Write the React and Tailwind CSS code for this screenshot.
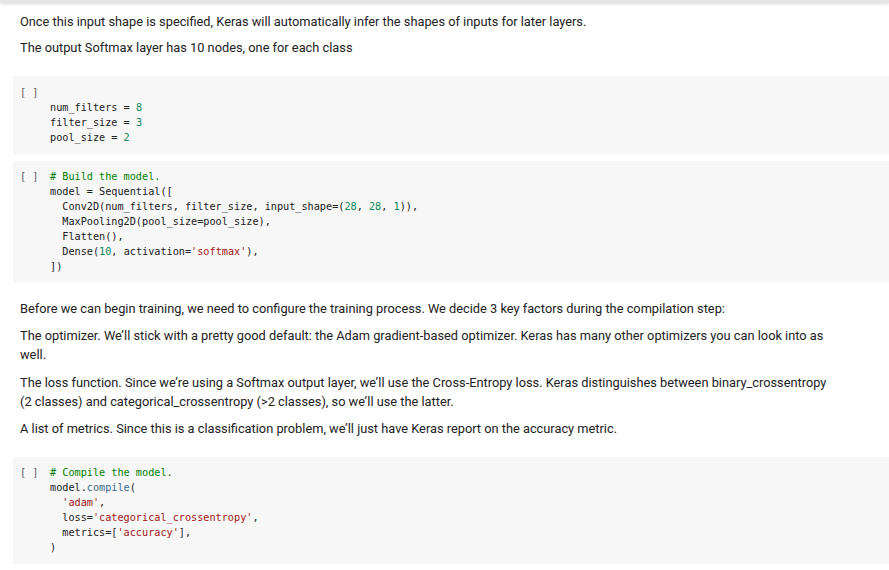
import React from "react";

const N = ({ children }) => <span className="text-[#09885a]">{children}</span>;
const S = ({ children }) => <span className="text-[#a31515]">{children}</span>;
const C = ({ children }) => <span className="text-[#008000]">{children}</span>;
const F = ({ children }) => <span className="text-[#3b6e8f]">{children}</span>;

function Cell({ lines, inline = true, className = "" }) {
  return (
    <div className={`ml-[13px] bg-[#f7f7f7] ${className}`}>
      <div className="flex font-['DejaVu_Sans_Mono',monospace] text-[10.2px] leading-[15px] text-[#212121] whitespace-pre">
        <div className="w-[37px] pl-[7px] text-[#616161]">[ ]</div>
        <div className={inline ? "" : "pt-[15px]"}>
          {lines.map((l, i) => (
            <div key={i}>{l}</div>
          ))}
        </div>
      </div>
    </div>
  );
}

function Md({ children, className = "" }) {
  return <p className={`leading-[19px] ${className}`}>{children}</p>;
}

export default function App() {
  return (
    <div className="w-[889px] h-[570px] overflow-hidden bg-white font-['Roboto',sans-serif] text-[12.8px] text-[#222222]">
      <div className="h-[3px] bg-[#e6e6e6] shadow-[0_1px_3px_rgba(0,0,0,0.15)]" />

      <div className="pl-5 pt-[9px] flex flex-col gap-[7px]">
        <Md>Once this input shape is specified, Keras will automatically infer the shapes of inputs for later layers.</Md>
        <Md>The output Softmax layer has 10 nodes, one for each class</Md>
      </div>

      <Cell
        className="mt-[19px] pt-[9px] pb-[9px]"
        inline={false}
        lines={[
          <>num_filters = <N>8</N></>,
          <>filter_size = <N>3</N></>,
          <>pool_size = <N>2</N></>,
        ]}
      />

      <Cell
        className="mt-[7px] pt-[8px] pb-[8px]"
        lines={[
          <C># Build the model.</C>,
          <>model = Sequential([</>,
          <>  Conv2D(num_filters, filter_size, input_shape=(<N>28</N>, <N>28</N>, <N>1</N>)),</>,
          <>  MaxPooling2D(pool_size=pool_size),</>,
          <>  Flatten(),</>,
          <>  Dense(<N>10</N>, activation=<S>'softmax'</S>),</>,
          <>])</>,
        ]}
      />

      <div className="pl-5 pt-[17px] pr-[56px] flex flex-col gap-[8px]">
        <Md>Before we can begin training, we need to configure the training process. We decide 3 key factors during the compilation step:</Md>
        <Md>The optimizer. We’ll stick with a pretty good default: the Adam gradient-based optimizer. Keras has many other optimizers you can look into as well.</Md>
        <Md className="mt-px">The loss function. Since we’re using a Softmax output layer, we’ll use the Cross-Entropy loss. Keras distinguishes between binary_crossentropy (2 classes) and categorical_crossentropy (&gt;2 classes), so we’ll use the latter.</Md>
        <Md>A list of metrics. Since this is a classification problem, we’ll just have Keras report on the accuracy metric.</Md>
      </div>

      <Cell
        className="mt-[19px] pt-[8px] pb-[9px]"
        lines={[
          <C># Compile the model.</C>,
          <>model.<F>compile</F>(</>,
          <>  <S>'adam'</S>,</>,
          <>  loss=<S>'categorical_crossentropy'</S>,</>,
          <>  metrics=[<S>'accuracy'</S>],</>,
          <>)</>,
        ]}
      />
    </div>
  );
}
